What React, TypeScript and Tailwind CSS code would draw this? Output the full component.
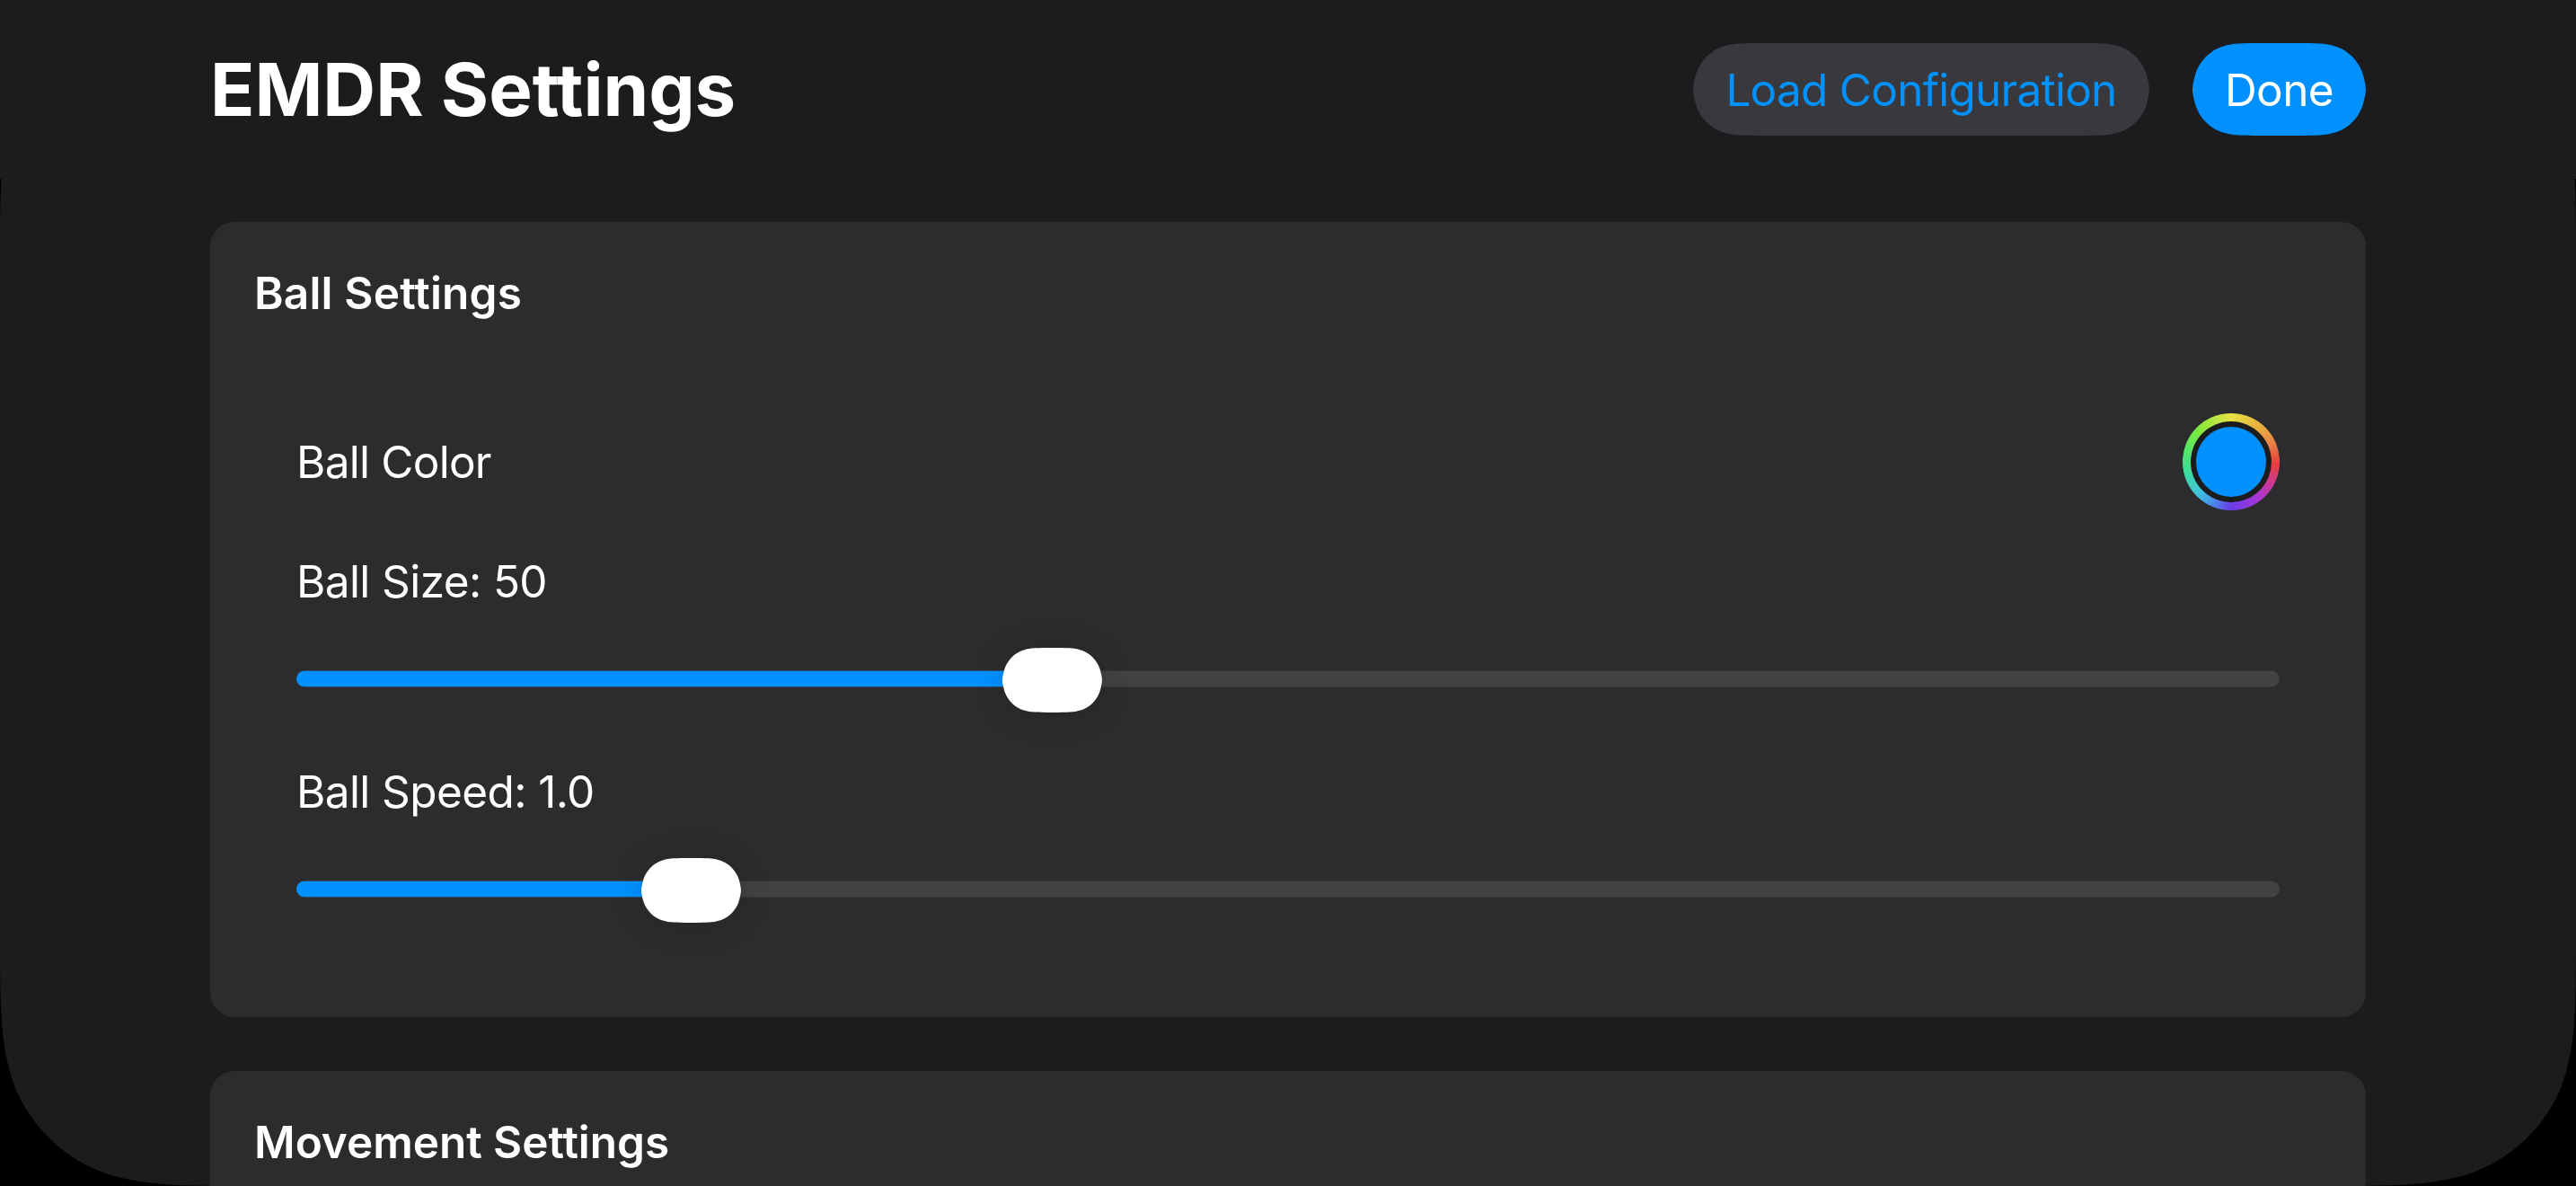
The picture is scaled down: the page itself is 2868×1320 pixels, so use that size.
import type { ReactNode } from "react";

type SliderProps = { label: string; fillClass: string; thumbClass: string };

function Slider({ label, fillClass, thumbClass }: SliderProps) {
  return (
    <div className="flex flex-col">
      <div className="h-[60px] text-[49.5px] leading-[60px] tracking-[-0.6px]">{label}</div>
      <div className="relative mt-11 flex h-[72px] items-center">
        <div className="h-[18px] w-full -translate-y-[1.5px] overflow-hidden rounded-full bg-[#424244]">
          <div className={`h-full bg-[#0091ff] ${fillClass}`} />
        </div>
        <div className={`absolute top-0 drop-shadow-[0_2px_16px_rgba(0,0,0,0.16)] ${thumbClass}`}>
          <div className="h-[72px] w-[111px] bg-white [clip-path:path('M55,0H56C71.8,0_79.7,0_86.9,2.4L88.3,2.7C97.6,6.1_104.9,13.4_108.3,22.7C111,31.3_111,36_111,36C111,36_111,40.7_108.3,49.3C104.9,58.6_97.6,65.9_88.3,69.3L86.9,69.6C79.7,72_71.8,72_56,72H55C39.2,72_31.3,72_24.1,69.6L22.7,69.3C13.4,65.9_6.1,58.6_2.7,49.3C0,40.7_0,36_0,36C0,36_0,31.3_2.7,22.7C6.1,13.4_13.4,6.1_22.7,2.7L24.1,2.4C31.3,0_39.2,0_55,0Z')]" />
        </div>
      </div>
    </div>
  );
}

type CardProps = { title: string; className: string; titleClass: string; children?: ReactNode };

function Card({ title, className, titleClass, children }: CardProps) {
  return (
    <section className={`shrink-0 rounded-[27px] bg-[#2c2c2e] px-12 pt-12 ${className}`}>
      <h2 className={`h-[62px] pl-px text-[49.5px] leading-[62px] font-semibold ${titleClass}`}>{title}</h2>
      {children}
    </section>
  );
}

export default function App() {
  return (
    <div className="h-[1320px] w-[2868px] overflow-hidden bg-black font-['Inter',sans-serif] text-white">
      <div className="bg-[#1c1c1e]">
        <header className="mx-[234px] flex h-[199px] items-start justify-between pt-12">
          <h1 className="mt-px h-[102px] text-[81.5px] leading-[102px] font-bold tracking-[-0.05px]">EMDR Settings</h1>
          <div className="flex gap-12">
            <button className="h-[103px] w-[508px] bg-[#39383d] text-[49.5px] leading-[104px] tracking-[-0.75px] whitespace-nowrap text-[#0091ff] [clip-path:path('M78.7,0H429.3C451.9,0_463.3,0_473.5,3.4L475.5,3.9C488.8,8.7_499.3,19.2_504.1,32.5C508,44.7_508,51.5_508,51.5C508,51.5_508,58.3_504.1,70.5C499.3,83.8_488.8,94.3_475.5,99.1L473.5,99.6C463.3,103_451.9,103_429.3,103H78.7C56.1,103_44.7,103_34.5,99.6L32.5,99.1C19.2,94.3_8.7,83.8_3.9,70.5C0,58.3_0,51.5_0,51.5C0,51.5_0,44.7_3.9,32.5C8.7,19.2_19.2,8.7_32.5,3.9L34.5,3.4C44.7,0_56.1,0_78.7,0Z')]">
              Load Configuration
            </button>
            <button className="h-[103px] w-[193px] bg-[#0091ff] text-[49.5px] leading-[104px] tracking-[-0.6px] whitespace-nowrap text-white [clip-path:path('M78.7,0H114.3C136.9,0_148.3,0_158.5,3.4L160.5,3.9C173.8,8.7_184.3,19.2_189.1,32.5C193,44.7_193,51.5_193,51.5C193,51.5_193,58.3_189.1,70.5C184.3,83.8_173.8,94.3_160.5,99.1L158.5,99.6C148.3,103_136.9,103_114.3,103H78.7C56.1,103_44.7,103_34.5,99.6L32.5,99.1C19.2,94.3_8.7,83.8_3.9,70.5C0,58.3_0,51.5_0,51.5C0,51.5_0,44.7_3.9,32.5C8.7,19.2_19.2,8.7_32.5,3.9L34.5,3.4C44.7,0_56.1,0_78.7,0Z')]">
              Done
            </button>
          </div>
        </header>
      </div>

      {/* Scroll area, clipped to the continuous corners of the device screen */}
      <main className="flex h-[1121px] flex-col gap-[60px] bg-[#1c1c1e] px-[234px] pt-12 [clip-path:path('M1.6,0C0,30_0,50_0,85V837C0,919_0,960_13.9,1004C31.4,1052_69.3,1090_117.5,1107C161.5,1121_202,1121_284,1121H2584C2666,1121_2707,1121_2750.5,1107C2798.7,1090_2836.6,1052_2854.1,1004C2868,960_2868,919_2868,837V85C2868,50_2868,30_2866.4,0Z')]">
        <Card title="Ball Settings" className="h-[885px]" titleClass="tracking-[0.18px]">
          <div className="flex flex-col px-12 pt-[103px]">
            <div className="flex h-[108px] items-center justify-between">
              <span className="text-[49.5px] leading-[60px] tracking-[-0.75px]">Ball Color</span>
              <div className="flex size-[108px] items-center justify-center rounded-full bg-[conic-gradient(from_0deg,#e6e044_0deg,#e8b43c_35deg,#e88a48_62deg,#e8403c_92deg,#cb3a9a_120deg,#a336d6_145deg,#6a3ce8_180deg,#4a86e8_203deg,#3ec4e0_225deg,#40e08a_265deg,#5ce860_290deg,#82e83c_315deg,#b4e644_338deg,#e6e044_360deg)]">
                <div className="flex size-[90px] items-center justify-center rounded-full bg-[#1c1c1e]">
                  <div className="size-[78px] rounded-full bg-[#0091ff]" />
                </div>
              </div>
            </div>
            <div className="mt-[49px] flex flex-col gap-[58px]">
              <Slider label="Ball Size: 50" fillClass="w-[842px]" thumbClass="left-[786px]" />
              <Slider label="Ball Speed: 1.0" fillClass="w-[440px]" thumbClass="left-[384px]" />
            </div>
          </div>
        </Card>
        <Card title="Movement Settings" className="h-[300px]" titleClass="tracking-[-0.03px]" />
      </main>
    </div>
  );
}
